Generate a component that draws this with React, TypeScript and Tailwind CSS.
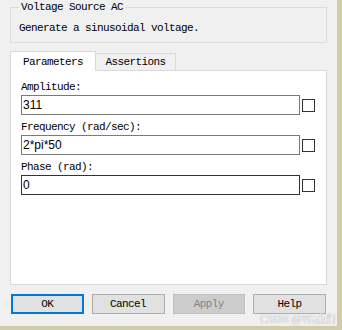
import React from 'react';

const mono = "font-['Liberation_Mono',monospace] text-[11px] tracking-[-0.6px] leading-[12px] text-black";

interface FieldProps {
  label: string;
  value: string;
  focused?: boolean;
}

const Field = ({ label, value, focused }: FieldProps) => {
  return (
    <div className="flex flex-col">
      <span className={mono}>{label}</span>
      <div className="mt-[2px] flex items-center gap-[2px]">
        <div
          className={`flex h-[20px] w-[279px] items-center border bg-white pl-[1px] font-['Liberation_Sans',sans-serif] text-[12px] text-black ${
            focused ? 'border-[#333333]' : 'border-[#7a7a7a]'
          }`}
        >
          {value}
        </div>
        <div className="h-[13px] w-[13px] border border-[#333333] bg-white" />
      </div>
    </div>
  );
};

interface ButtonProps {
  text: string;
  primary?: boolean;
  disabled?: boolean;
}

const DlgButton = ({ text, primary, disabled }: ButtonProps) => {
  let style = 'border border-[#adadad] bg-[#e1e1e1] text-black';
  if (primary) style = 'border-2 border-[#0078d7] bg-[#e1e1e1] text-black';
  if (disabled) style = 'border border-[#bfbfbf] bg-[#cccccc] text-[#838383]';
  return (
    <div
      className={`flex h-[20px] w-[73px] items-center justify-center font-['Liberation_Mono',monospace] text-[11px] tracking-[-0.6px] leading-[12px] ${style}`}
    >
      {text}
    </div>
  );
};

const App = () => {
  return (
    <div className="relative h-[330px] w-[342px] overflow-hidden bg-[#cfcca6]">
      <div className="flex h-[326px] w-[337px] flex-col bg-[#f0f0f0]">
        {/* group box */}
        <fieldset className="mx-[10px] mt-[1px] border border-[#dcdcdc] px-[8px] pt-[9px] pb-[8px]">
          <legend className={`${mono} px-[2px]`}>Voltage Source AC</legend>
          <div className={mono}>Generate a sinusoidal voltage.</div>
        </fieldset>

        {/* tabs */}
        <div className="mx-[10px] mt-[8px] flex items-end">
          <div
            className={`${mono} relative z-10 -mb-px h-[20px] w-[86px] border-x border-t border-[#d9d9d9] bg-white pt-[4px] text-center`}
          >
            Parameters
          </div>
          <div
            className={`${mono} h-[17px] w-[80px] border-t border-r border-[#d9d9d9] bg-[#f0f0f0] pt-[2px] text-center`}
          >
            Assertions
          </div>
        </div>

        {/* tab panel */}
        <div className="mx-[10px] flex h-[215px] flex-col gap-[6px] border border-[#d9d9d9] bg-white px-[10px] pt-[10px]">
          <Field label="Amplitude:" value="311" />
          <Field label="Frequency (rad/sec):" value="2*pi*50" />
          <Field label="Phase (rad):" value="0" focused />
        </div>

        {/* buttons */}
        <div className="mt-[9px] flex gap-[8px] px-[11px]">
          <DlgButton text="OK" primary />
          <DlgButton text="Cancel" />
          <DlgButton text="Apply" disabled />
          <DlgButton text="Help" />
        </div>
      </div>

      <span className="absolute right-[5px] bottom-[6px] font-['Noto_Sans_CJK_SC',sans-serif] text-[11px] leading-[12px] text-[#f4f4f4] [text-shadow:0_0_1px_#8a8a8a]">
        CSDN @YG点灯
      </span>
    </div>
  );
};

export default App;
